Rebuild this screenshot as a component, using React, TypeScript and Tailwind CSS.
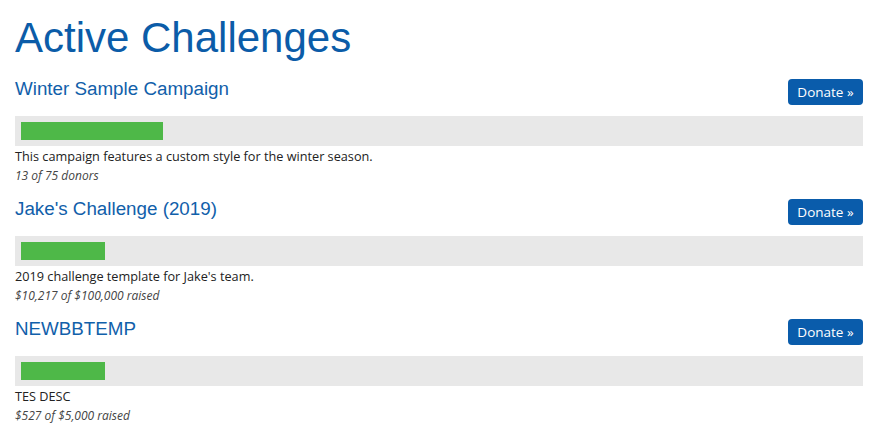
const challenges = [
  {
    name: 'Winter Sample Campaign',
    description: 'This campaign features a custom style for the winter season.',
    progress: 'w-[142px]',
    stat: '13 of 75 donors',
  },
  {
    name: "Jake's Challenge (2019)",
    description: "2019 challenge template for Jake's team.",
    progress: 'w-[84px]',
    stat: '$10,217 of $100,000 raised',
  },
  {
    name: 'NEWBBTEMP',
    description: 'TES DESC',
    progress: 'w-[84px]',
    stat: '$527 of $5,000 raised',
  },
];

export default function App() {
  return (
    <div className="min-h-[439px] bg-white px-[15px] pt-[15px]">
      <h1 className="font-['Liberation_Sans',Arial,sans-serif] text-[42px] leading-[46px] text-[#0b5ca8]">
        Active Challenges
      </h1>

      <div className="mt-[18px] flex flex-col gap-[13px]">
        {challenges.map((c) => (
          <section key={c.name}>
            <div className="flex items-start justify-between">
              <h3 className="-mt-[3px] font-['Liberation_Sans',Arial,sans-serif] text-[18.8px] leading-[26px] text-[#1160aa]">
                {c.name}
              </h3>
              <button
                type="button"
                className="h-[26px] w-[75px] rounded-[4px] bg-[#0a5cab] font-['Open_Sans',sans-serif] text-[13.5px] text-white"
              >
                Donate »
              </button>
            </div>

            <div className="mt-[11px] h-[30px] bg-[#e8e8e8] p-[6px]">
              <div className={`h-[18px] bg-[#4eb848] ${c.progress}`} />
            </div>

            <p className="font-['Open_Sans',sans-serif] text-[12.7px] leading-[20px] text-[#222]">
              {c.description}
            </p>
            <p className="font-['Open_Sans',sans-serif] text-[12px] italic leading-[20px] text-[#444]">
              {c.stat}
            </p>
          </section>
        ))}
      </div>
    </div>
  );
}
